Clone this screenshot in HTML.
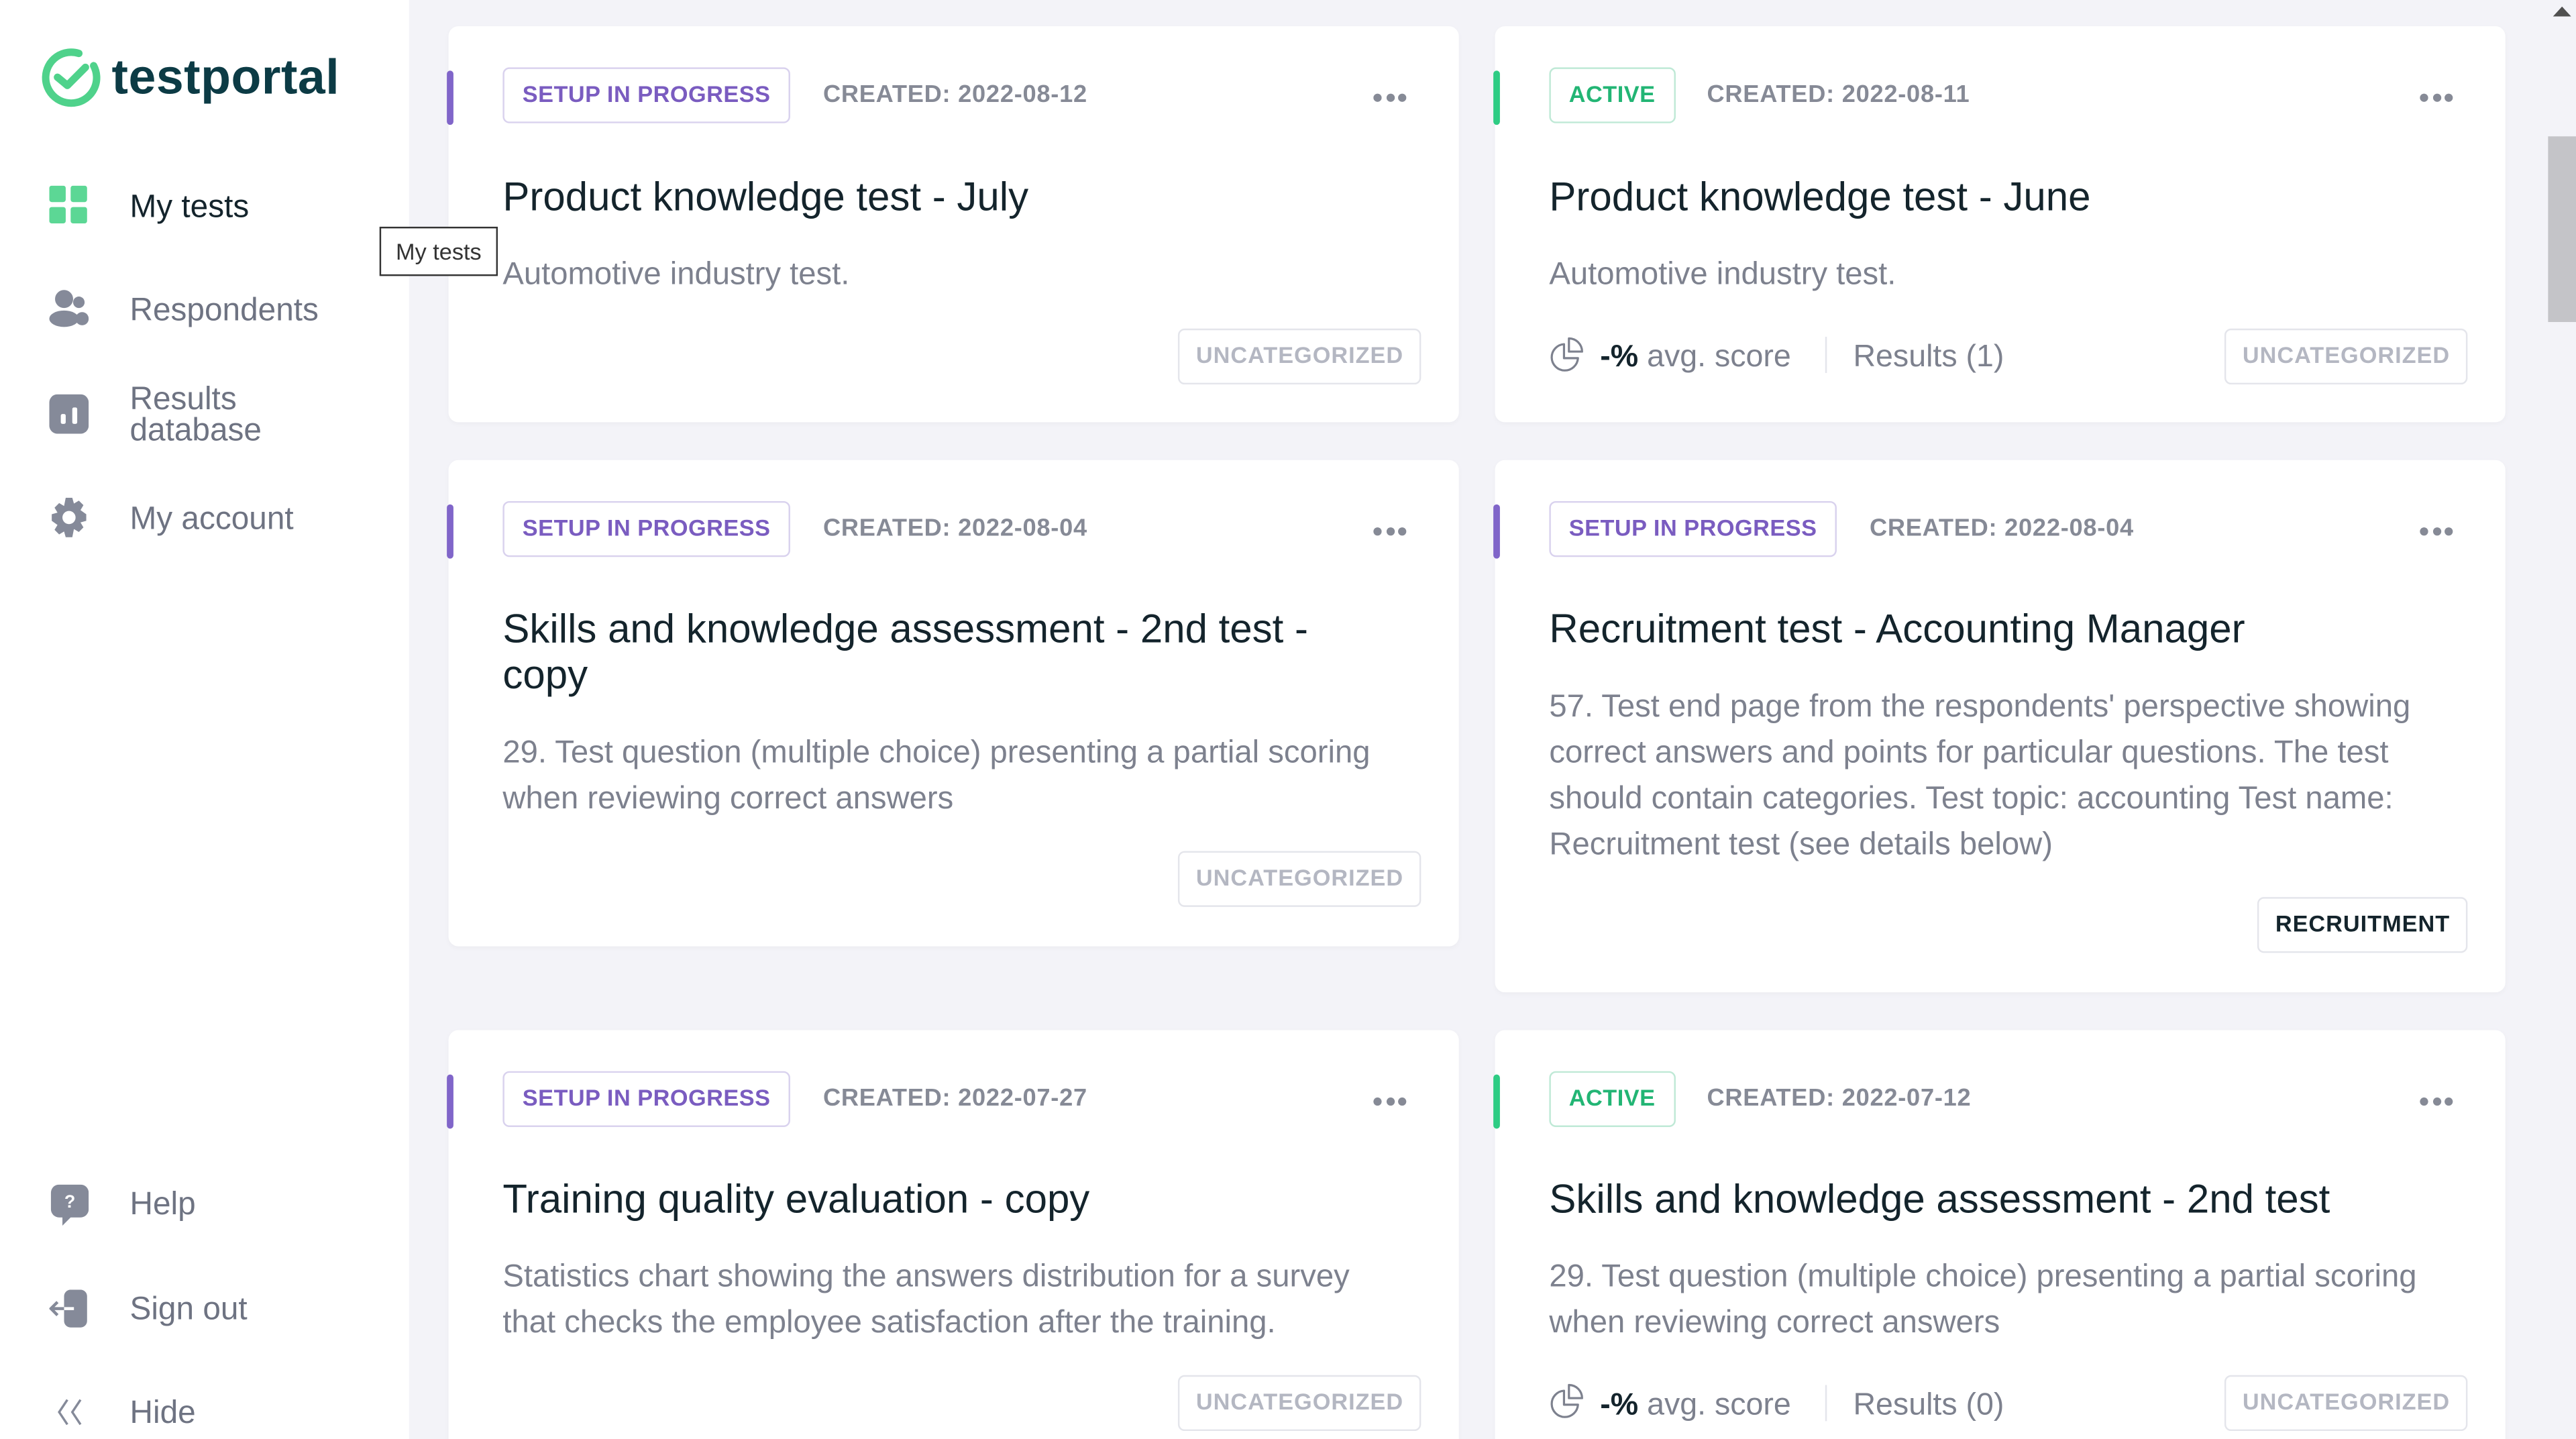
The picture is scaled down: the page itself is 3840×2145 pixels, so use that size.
<!DOCTYPE html>
<html><head><meta charset="utf-8"><style>
*{box-sizing:border-box;margin:0;padding:0}
html,body{width:3840px;height:2145px;overflow:hidden;background:#f3f3f8}
#w{position:absolute;left:0;top:0;width:1568px;height:876px;transform:scale(2.44898);transform-origin:0 0;font-family:"Liberation Sans",sans-serif;background:#f3f3f8;overflow:hidden}
.abs{position:absolute}
#side{left:0;top:0;width:249px;height:876px;background:#fff}
.nav{position:absolute;left:79px;font-size:19.5px;color:#6e7382;line-height:19px}
.ico{position:absolute;left:30px}
.card{position:absolute;background:#fff;border-radius:6px;box-shadow:0 1px 3px rgba(0,0,0,.03)}
.bar{position:absolute;left:-1px;top:27px;width:4px;height:33px;border-radius:2px}
.badge{position:absolute;left:33px;top:25px;height:34px;border-radius:4px;padding:0 11px;font-size:14px;line-height:31px;letter-spacing:.2px;font-weight:bold}
.setup{border:1px solid #d9d2ee;color:#7a5cc0}
.active{border:1px solid #bfe9d6;color:#22b574}
.created{position:absolute;top:34px;font-size:14.8px;color:#868a96;letter-spacing:.3px;font-weight:bold}
.dots{position:absolute;top:41px;right:32px;font-size:0}
.dots i{display:inline-block;width:5px;height:5px;border-radius:50%;background:#868a96;margin-left:2.5px}
.title{position:absolute;left:33px;font-size:24.5px;color:#14242c;line-height:28px;font-weight:500}
.desc{position:absolute;left:33px;font-size:19.3px;color:#7d818e;line-height:28px}
.tag{position:absolute;height:34px;border:1px solid #e4e5eb;border-radius:4px;font-size:14px;line-height:31px;color:#b4b7c2;padding:0 10px;letter-spacing:.4px;font-weight:bold}
.stat{position:absolute;left:33px;font-size:19px;color:#7d818e;line-height:20px;white-space:nowrap}
</style></head><body><div id="w">
<div id="side" class="abs">
 <svg class="abs" style="left:24px;top:28px" width="38" height="38" viewBox="0 0 38 38"><path d="M24 4.5A15.5 15.5 0 1 0 33 12" fill="none" stroke="#4fd28b" stroke-width="4.5" stroke-linecap="round"/><path d="M11 19l6 5 11-11" fill="none" stroke="#4fd28b" stroke-width="4.5" stroke-linecap="round" stroke-linejoin="round"/></svg>
 <div class="abs" style="left:68px;top:31px;font-size:30px;font-weight:bold;color:#0c3b45;letter-spacing:.2px">testportal</div>
 <svg class="ico" style="top:113px" width="24" height="24"><rect x="0" y="0" width="10" height="10" rx="1.5" fill="#5cd795"/><rect x="13" y="0" width="10" height="10" rx="1.5" fill="#5cd795"/><rect x="0" y="13" width="10" height="10" rx="1.5" fill="#5cd795"/><rect x="13" y="13" width="10" height="10" rx="1.5" fill="#5cd795"/></svg>
 <div class="nav" style="top:117px;color:#14242c;font-weight:500">My tests</div>
 <svg class="ico" style="top:176px" width="24" height="25"><circle cx="9" cy="6" r="5.5" fill="#858a99"/><ellipse cx="9" cy="18" rx="9" ry="5" fill="#858a99"/><circle cx="18" cy="8" r="3.5" fill="#858a99"/><ellipse cx="20" cy="18" rx="4" ry="4" fill="#858a99"/></svg>
 <div class="nav" style="top:180px">Respondents</div>
 <svg class="ico" style="top:240px" width="24" height="24"><rect width="24" height="24" rx="5" fill="#858a99"/><rect x="7" y="12" width="3" height="6" rx="1" fill="#fff"/><rect x="14" y="8" width="3" height="10" rx="1" fill="#fff"/></svg>
 <div class="nav" style="top:234px;line-height:18.5px">Results<br>database</div>
 <svg class="ico" style="top:303px" width="24" height="24" viewBox="0 0 24 24"><path fill="#858a99" d="M10 0h4l1 3.5 3-1.8 2.8 2.8-1.8 3L22.5 10v4l-3.5 1 1.8 3-2.8 2.8-3-1.8L14 24h-4l-1-3.5-3 1.8-2.8-2.8 1.8-3L1.5 14v-4L5 9 3.2 6 6 3.2l3 1.8z"/><circle cx="12" cy="12" r="4" fill="#fff"/></svg>
 <div class="nav" style="top:307px">My account</div>
 <svg class="ico" style="top:721px" width="24" height="26"><rect x="1" y="0" width="23" height="20" rx="5" fill="#858a99"/><path d="M8 19l0 6 6-6z" fill="#858a99"/><text x="12.5" y="14" font-size="11" font-weight="bold" fill="#fff" text-anchor="middle" font-family="Liberation Sans">?</text></svg>
 <div class="nav" style="top:724px">Help</div>
 <svg class="ico" style="top:785px" width="24" height="24"><rect x="9" y="0" width="14" height="23" rx="4" fill="#858a99"/><path d="M1 11.5h14M5 7.5l-4 4 4 4" stroke="#858a99" stroke-width="1.8" fill="none"/><path d="M9 11.5h6" stroke="#fff" stroke-width="1.8"/></svg>
 <div class="nav" style="top:788px">Sign out</div>
 <svg class="ico" style="top:851px;left:33px" width="20" height="18"><path d="M8 1L3 8.5 8 16M16 1l-5 7.5 5 7.5" stroke="#858a99" stroke-width="1.4" fill="none"/></svg>
 <div class="nav" style="top:851px">Hide</div>
</div>

<!-- row1 -->
<div class="card" style="left:273px;top:16px;width:615px;height:241px">
 <div class="bar" style="background:#8065c9"></div>
 <div class="badge setup">SETUP IN PROGRESS</div>
 <div class="created" style="left:228px">CREATED: 2022-08-12</div>
 <div class="dots"><i></i><i></i><i></i></div>
 <div class="title" style="top:91px">Product knowledge test - July</div>
 <div class="desc" style="top:138px">Automotive industry test.</div>
 <div class="tag" style="left:444px;top:184px">UNCATEGORIZED</div>
</div>
<div class="card" style="left:910px;top:16px;width:615px;height:241px">
 <div class="bar" style="background:#2ecc84"></div>
 <div class="badge active">ACTIVE</div>
 <div class="created" style="left:129px">CREATED: 2022-08-11</div>
 <div class="dots"><i></i><i></i><i></i></div>
 <div class="title" style="top:91px">Product knowledge test - June</div>
 <div class="desc" style="top:138px">Automotive industry test.</div>
 <svg class="abs" style="left:33px;top:189px" width="22" height="22" viewBox="0 0 22 22"><path d="M9 4.5A8 8 0 1 0 17.5 13H9z" fill="none" stroke="#7d818e" stroke-width="1.3" stroke-linejoin="round"/><path d="M12 1a8 8 0 0 1 8 8h-8z" fill="none" stroke="#7d818e" stroke-width="1.3" stroke-linejoin="round"/></svg>
 <div class="stat" style="left:64px;top:192px"><b style="color:#14242c">-%</b> avg. score</div>
 <div class="abs" style="left:201px;top:189px;width:1px;height:22px;background:#e4e5eb"></div>
 <div class="stat" style="left:218px;top:192px">Results (1)</div>
 <div class="tag" style="left:444px;top:184px">UNCATEGORIZED</div>
</div>
<!-- row2 -->
<div class="card" style="left:273px;top:280px;width:615px;height:296px">
 <div class="bar" style="background:#8065c9"></div>
 <div class="badge setup">SETUP IN PROGRESS</div>
 <div class="created" style="left:228px">CREATED: 2022-08-04</div>
 <div class="dots"><i></i><i></i><i></i></div>
 <div class="title" style="top:90px;width:520px">Skills and knowledge assessment - 2nd test - copy</div>
 <div class="desc" style="top:165px;width:540px">29. Test question (multiple choice) presenting a partial scoring when reviewing correct answers</div>
 <div class="tag" style="left:444px;top:238px">UNCATEGORIZED</div>
</div>
<div class="card" style="left:910px;top:280px;width:615px;height:324px">
 <div class="bar" style="background:#8065c9"></div>
 <div class="badge setup">SETUP IN PROGRESS</div>
 <div class="created" style="left:228px">CREATED: 2022-08-04</div>
 <div class="dots"><i></i><i></i><i></i></div>
 <div class="title" style="top:90px">Recruitment test - Accounting Manager</div>
 <div class="desc" style="top:137px;width:535px">57. Test end page from the respondents' perspective showing correct answers and points for particular questions. The test should contain categories. Test topic: accounting Test name: Recruitment test (see details below)</div>
 <div class="tag" style="left:464px;top:266px;color:#14242c">RECRUITMENT</div>
</div>
<!-- row3 -->
<div class="card" style="left:273px;top:627px;width:615px;height:280px">
 <div class="bar" style="background:#8065c9"></div>
 <div class="badge setup">SETUP IN PROGRESS</div>
 <div class="created" style="left:228px">CREATED: 2022-07-27</div>
 <div class="dots"><i></i><i></i><i></i></div>
 <div class="title" style="top:90px">Training quality evaluation - copy</div>
 <div class="desc" style="top:137px;width:535px">Statistics chart showing the answers distribution for a survey that checks the employee satisfaction after the training.</div>
 <div class="tag" style="left:444px;top:210px">UNCATEGORIZED</div>
</div>
<div class="card" style="left:910px;top:627px;width:615px;height:280px">
 <div class="bar" style="background:#2ecc84"></div>
 <div class="badge active">ACTIVE</div>
 <div class="created" style="left:129px">CREATED: 2022-07-12</div>
 <div class="dots"><i></i><i></i><i></i></div>
 <div class="title" style="top:90px">Skills and knowledge assessment - 2nd test</div>
 <div class="desc" style="top:137px;width:540px">29. Test question (multiple choice) presenting a partial scoring when reviewing correct answers</div>
 <svg class="abs" style="left:33px;top:215px" width="22" height="22" viewBox="0 0 22 22"><path d="M9 4.5A8 8 0 1 0 17.5 13H9z" fill="none" stroke="#7d818e" stroke-width="1.3" stroke-linejoin="round"/><path d="M12 1a8 8 0 0 1 8 8h-8z" fill="none" stroke="#7d818e" stroke-width="1.3" stroke-linejoin="round"/></svg>
 <div class="stat" style="left:64px;top:219px"><b style="color:#14242c">-%</b> avg. score</div>
 <div class="abs" style="left:201px;top:216px;width:1px;height:22px;background:#e4e5eb"></div>
 <div class="stat" style="left:218px;top:219px">Results (0)</div>
 <div class="tag" style="left:444px;top:210px">UNCATEGORIZED</div>
</div>
<div class="abs" style="left:231px;top:138px;width:72px;height:30px;border:1px solid #333;background:#fff;font-size:14px;color:#333;line-height:28px;text-align:center;z-index:5">My tests</div>
<!-- scrollbar -->
<div class="abs" style="left:1551px;top:83px;width:17px;height:113px;background:#c4c4c8"></div>
<svg class="abs" style="left:1554px;top:4px" width="11" height="7"><path d="M0 6L5.5 0 11 6z" fill="#505050"/></svg>
</div></body></html>
